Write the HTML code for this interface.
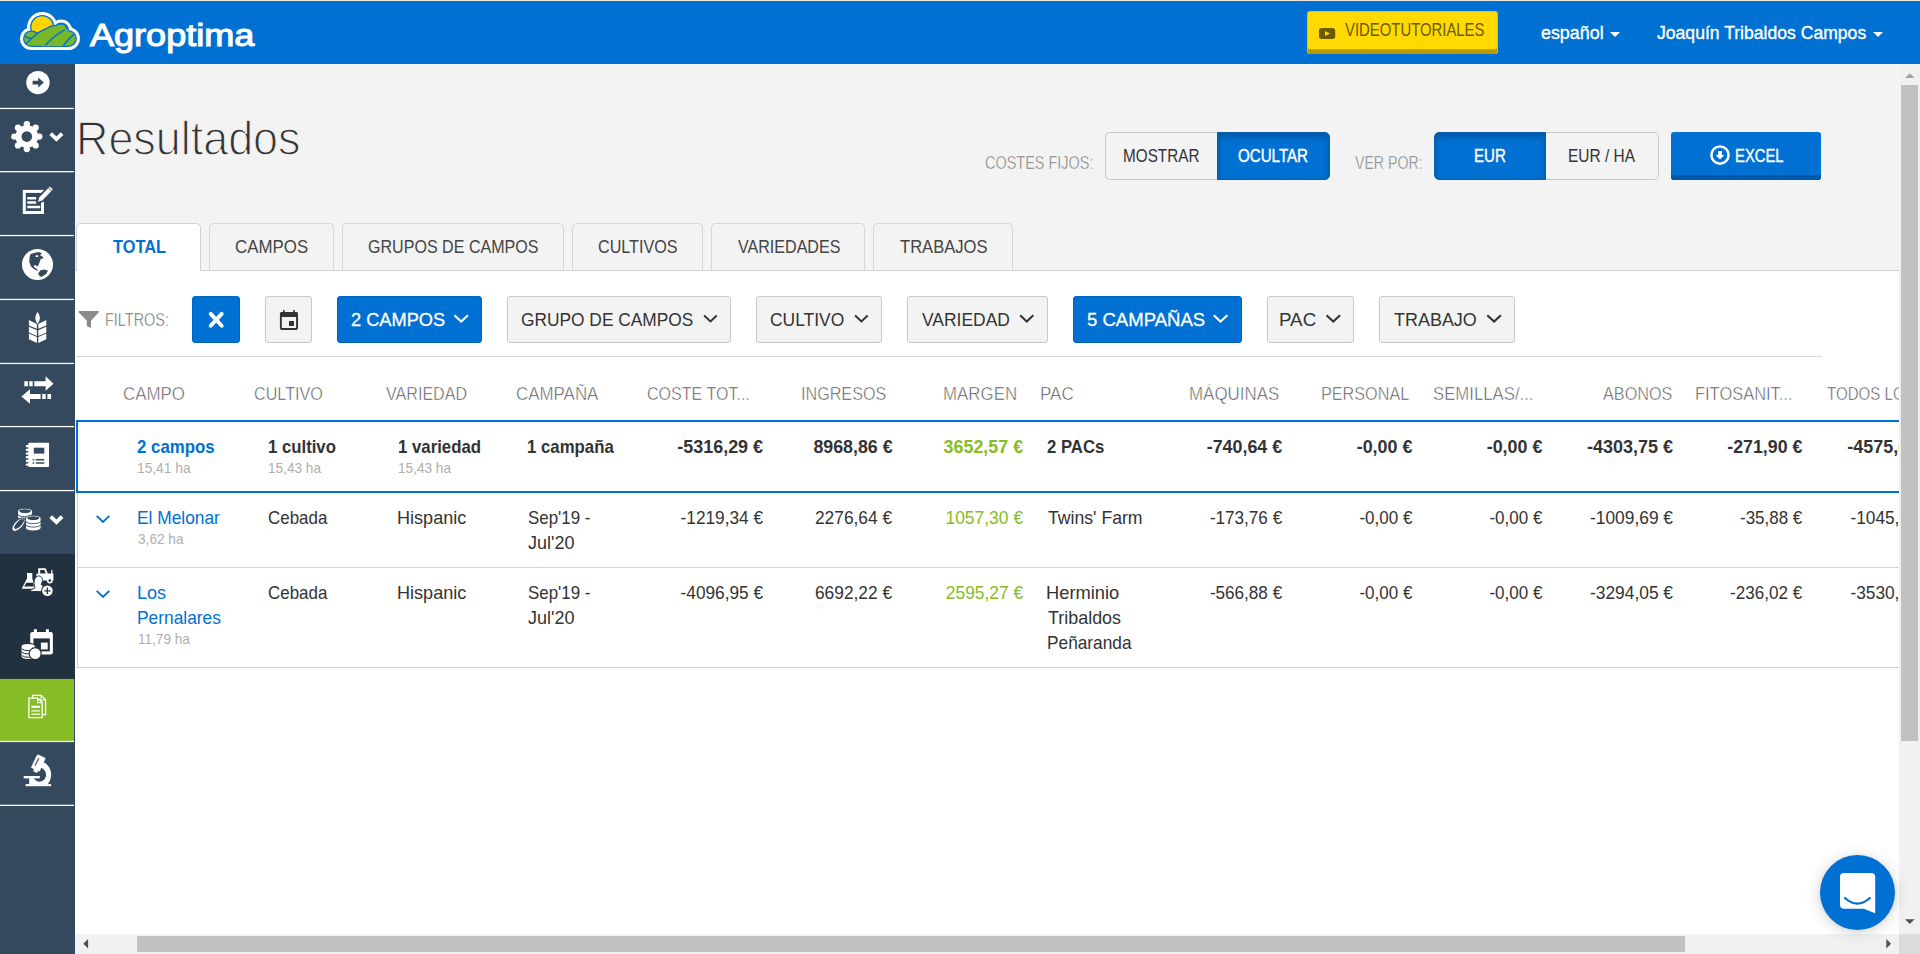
<!DOCTYPE html>
<html lang="es">
<head>
<meta charset="utf-8">
<title>Agroptima - Resultados</title>
<style>
*{box-sizing:border-box;margin:0;padding:0}
html,body{width:1920px;height:954px;overflow:hidden;background:#fff;font-family:"Liberation Sans",sans-serif;color:#333}
#root{position:absolute;left:0;top:0;width:1920px;height:954px;overflow:hidden}
.a{position:absolute}
.t{position:absolute;white-space:nowrap;display:block}
svg{position:absolute;overflow:visible}
</style>
</head>
<body>
<div id="root">
<div class="a" style="left:75px;top:64px;width:1845px;height:207px;background:#f3f3f3"></div>
<div class="a" style="left:0px;top:0px;width:1920px;height:1px;background:#ece7df"></div>
<div class="a" style="left:0px;top:1px;width:1920px;height:63px;background:#0070d2"></div>
<div class="a" style="left:0px;top:64px;width:75px;height:890px;background:#34495e"></div>
<svg style="left:0;top:64px" width="75" height="890" viewBox="0 64 75 890">
<rect x="0" y="553.9" width="75" height="125" fill="#22313f"/>
<rect x="0" y="678.9" width="74" height="62.2" fill="#86bc24"/>
<rect x="0" y="107.8" width="74" height="1.3" fill="#fafbfc"/>
<rect x="0" y="171.0" width="74" height="1.3" fill="#fafbfc"/>
<rect x="0" y="234.9" width="74" height="1.3" fill="#fafbfc"/>
<rect x="0" y="298.8" width="74" height="1.3" fill="#fafbfc"/>
<rect x="0" y="362.8" width="74" height="1.3" fill="#fafbfc"/>
<rect x="0" y="425.9" width="74" height="1.3" fill="#fafbfc"/>
<rect x="0" y="489.9" width="74" height="1.3" fill="#fafbfc"/>
<rect x="0" y="740.8" width="74" height="1.3" fill="#fafbfc"/>
<rect x="0" y="804.7" width="74" height="1.3" fill="#fafbfc"/>
<circle cx="37.95" cy="82.6" r="11.7" fill="#fff"/>
<path d="M32.6 80.8H38.2V77.6L43.9 82.6L38.2 87.6V84.4H32.6Z" fill="#34495e"/>
<circle cx="26.8" cy="136.6" r="11.3" fill="#fff"/>
<circle cx="26.80" cy="124.10" r="3.15" fill="#fff"/>
<circle cx="35.64" cy="127.76" r="3.15" fill="#fff"/>
<circle cx="39.30" cy="136.60" r="3.15" fill="#fff"/>
<circle cx="35.64" cy="145.44" r="3.15" fill="#fff"/>
<circle cx="26.80" cy="149.10" r="3.15" fill="#fff"/>
<circle cx="17.96" cy="145.44" r="3.15" fill="#fff"/>
<circle cx="14.30" cy="136.60" r="3.15" fill="#fff"/>
<circle cx="17.96" cy="127.76" r="3.15" fill="#fff"/>
<circle cx="26.8" cy="136.6" r="5.3" fill="#34495e"/>
<path d="M50.7 133.6L56.4 139.1L62.1 133.6" fill="none" stroke="#fff" stroke-width="3.8"/>
<rect x="24.3" y="191.4" width="18.2" height="21.1" fill="none" stroke="#fff" stroke-width="3"/>
<path d="M27.3 198.2H36.2M27.3 202.5H36.2M27.3 207H40.2" stroke="#fff" stroke-width="2.5" fill="none"/>
<path d="M49.88 186.48L52.92 189.52L42.22 200.62L38.1 201.7L39.18 197.58Z" fill="#fff" stroke="#34495e" stroke-width="3.6" stroke-linejoin="round"/>
<path d="M49.88 186.48L52.92 189.52L42.22 200.62L38.1 201.7L39.18 197.58Z" fill="#fff"/>
<path d="M48.5 187.9L51.5 190.9" stroke="#34495e" stroke-width="0.9"/>
<circle cx="37.5" cy="264.5" r="15.5" fill="#fff"/>
<path d="M30.3 254.3L33.9 253.1L38.6 252L42.1 253.3L40 255L42.8 257.1L43.5 258.3L40.7 259L39.8 261.8L38.3 265.6L36.7 266.5L35.8 265.1L33.9 265.6L34.3 267.5L36.2 268.4L38.1 270.3L37.2 270.8L33.9 268.9L31 266.5L29.2 261.8L29.6 257.1Z" fill="#34495e"/>
<path d="M38.1 273.6L40.5 270.3L44.2 269.4L48 270.8L46.1 274.1L41.4 276.9L39.5 276Z" fill="#34495e"/>
<path d="M35.3 255.7L37.6 255L38.6 256.2L37.6 257.1L35.8 256.9Z" fill="#fff"/>
<path d="M37.6 311.9C40.6 316 40.6 320 37.6 323.8C34.6 320 34.6 316 37.6 311.9Z" fill="#fff"/>
<path d="M28.90 319.9L36.90 323.9V328.8L28.90 325.5Z" fill="#fff"/>
<path d="M46.30 319.9L38.30 323.9V328.8L46.30 325.5Z" fill="#fff"/>
<path d="M28.90 326.7L36.90 330.2V335.9L28.90 332.6Z" fill="#fff"/>
<path d="M46.30 326.7L38.30 330.2V335.9L46.30 332.6Z" fill="#fff"/>
<path d="M28.90 333.5L36.90 337.1V343.1L28.90 339.2Z" fill="#fff"/>
<path d="M46.30 333.5L38.30 337.1V343.1L46.30 339.2Z" fill="#fff"/>
<path d="M24.3 381.3H27.9V386.2H24.3ZM29.3 381.3H32.7V386.2H29.3ZM34.3 381.3H45.6V376.3L53.5 383.7L45.6 390.8V386.2H34.3Z" fill="#fff"/>
<path d="M51.1 394H47.4V399H51.1ZM45.7 394H42.2V399H45.7ZM40.6 394H30V389.2L21.4 396.5L30 403.8V399H40.6Z" fill="#fff"/>
<rect x="28.3" y="442.75" width="20.75" height="24.35" rx="0.8" fill="#fff"/>
<rect x="25.8" y="445.00" width="3.4" height="2.3" rx=".7" fill="#fff"/>
<rect x="25.8" y="448.69" width="3.4" height="2.3" rx=".7" fill="#fff"/>
<rect x="25.8" y="452.38" width="3.4" height="2.3" rx=".7" fill="#fff"/>
<rect x="25.8" y="456.07" width="3.4" height="2.3" rx=".7" fill="#fff"/>
<rect x="25.8" y="459.76" width="3.4" height="2.3" rx=".7" fill="#fff"/>
<rect x="25.8" y="463.45" width="3.4" height="2.3" rx=".7" fill="#fff"/>
<rect x="33.8" y="447.7" width="10.5" height="5.9" fill="#34495e"/>
<path d="M32.7 459.7H34.2M35.8 459.7H44.3M32.7 463.1H34.2M35.8 463.1H44.3" stroke="#34495e" stroke-width="1.5"/>
<path d="M17.5 511.1A7.55 2.9 0 0 1 32.6 511.1V519.5A7.55 2.9 0 0 1 17.5 519.5Z" fill="#fff" stroke="#34495e" stroke-width="1"/>
<path d="M17.5 513.9A7.55 2.9 0 0 0 32.6 513.9" fill="none" stroke="#34495e" stroke-width="0.9"/>
<path d="M17.5 517.0A7.55 2.9 0 0 0 32.6 517.0" fill="none" stroke="#34495e" stroke-width="0.9"/>
<ellipse cx="25.05" cy="511.1" rx="5.85" ry="1.90" fill="#34495e"/>
<ellipse cx="18.5" cy="524.6" rx="8.4" ry="4.2" fill="#fff" stroke="#34495e" stroke-width="1" transform="rotate(-45 18.5 524.6)"/>
<ellipse cx="19.1" cy="523.9" rx="6.6" ry="2.5" fill="#34495e" transform="rotate(-45 19.1 523.9)"/>
<path d="M25.499999999999996 518.1A7.8 2.9 0 0 1 41.099999999999994 518.1V528.1A7.8 2.9 0 0 1 25.499999999999996 528.1Z" fill="#fff" stroke="#34495e" stroke-width="1"/>
<path d="M25.499999999999996 520.8A7.8 2.9 0 0 0 41.099999999999994 520.8" fill="none" stroke="#34495e" stroke-width="0.9"/>
<path d="M25.499999999999996 524.2A7.8 2.9 0 0 0 41.099999999999994 524.2" fill="none" stroke="#34495e" stroke-width="0.9"/>
<ellipse cx="33.3" cy="518.1" rx="6.1" ry="1.90" fill="#34495e"/>
<path d="M50.7 516.6L56.4 522.1L62.1 516.6" fill="none" stroke="#fff" stroke-width="3.8"/>
<path d="M27 573H32.3V578.6L35.6 588.8H21.6L27 578.6Z" fill="#fff"/>
<path d="M26.2 582.7H33L34 586.4H24.2Z" fill="#22313f"/>
<path d="M38.2 568.2H45.6L47.8 573.6H51.2V570H52.4V573.6H53.4V580.4H36.4V573.8H38.2Z" fill="#fff"/>
<path d="M40.2 570H44.4L45.8 573.6H40.2Z" fill="#22313f"/>
<circle cx="49.8" cy="580.6" r="2.9" fill="#fff"/><circle cx="49.8" cy="580.6" r="1.3" fill="#22313f"/>
<path d="M37.6 576.2C40.4 575.4 42.6 577.4 42.4 580.6C42.3 582.4 41.6 583.6 41 584.4C43.6 585.6 45.6 587.4 45.8 591.6H30.2C30.4 590 32.2 589 34.6 588.2C35.4 587.4 34.2 585.6 34 583.6C33.8 580.2 35 577 37.6 576.2Z" fill="#fff" stroke="#22313f" stroke-width="1"/>
<circle cx="47.4" cy="590.8" r="6.4" fill="#22313f"/><circle cx="47.4" cy="590.8" r="5.3" fill="#fff"/>
<path d="M44.2 590.8H50.6M47.4 587.6V594" stroke="#22313f" stroke-width="1.3"/>
<rect x="30.2" y="632" width="22.7" height="22.5" rx="2.2" fill="#fff"/>
<rect x="33.9" y="629.2" width="3" height="4" fill="#fff"/><rect x="45.9" y="629.2" width="3" height="4" fill="#fff"/>
<rect x="33.4" y="638.4" width="16.4" height="13" fill="#22313f"/>
<rect x="40.9" y="642.6" width="6.8" height="6.8" fill="#fff"/>
<path d="M21 646.4A7.2 3 0 0 1 35.4 646.4V656.6A7.2 3 0 0 1 21 656.6Z" fill="#fff" stroke="#22313f" stroke-width="1.2"/>
<path d="M22 649.0A7.2 2.6 0 0 0 35.4 649.0" fill="none" stroke="#22313f" stroke-width="1"/>
<path d="M22 652.3A7.2 2.6 0 0 0 35.4 652.3" fill="none" stroke="#22313f" stroke-width="1"/>
<path d="M22 655.6A7.2 2.6 0 0 0 35.4 655.6" fill="none" stroke="#22313f" stroke-width="1"/>
<circle cx="35.2" cy="653.6" r="6" fill="#fff" stroke="#22313f" stroke-width="1.2"/>
<path d="M32.7 698.8V695.4H41.2L45.6 699.8V714.6H42.2" fill="none" stroke="#fff" stroke-width="1.3"/>
<path d="M41 695.6V700H45.4" fill="none" stroke="#fff" stroke-width="1.1"/>
<path d="M28.9 698.2H37.8L42.2 702.6V717.6H28.9Z" fill="#86bc24" stroke="#fff" stroke-width="1.3"/>
<path d="M37.6 698.4V702.8H42" fill="none" stroke="#fff" stroke-width="1.1"/>
<path d="M31.4 706.8H39.8" stroke="#fff" stroke-width="2.2"/><path d="M31.4 710.8H39.8M31.4 714.2H39.8" stroke="#fff" stroke-width="1.2"/>
<path d="M38.2 754.9L45.2 758.3L39.4 771.2L37.9 770.5L36.9 772.6L33.6 771L34.5 769L31.4 767.5L37.2 755.3Z" fill="#fff" stroke="#fff" stroke-width="0.8" stroke-linejoin="round"/>
<path d="M38.9 758.2L35 765.4" stroke="#34495e" stroke-width="1.15"/>
<path d="M43.3 762.2C47 763.6 50.6 767.6 51.1 773.4C51.4 777.8 49.8 781.8 47.4 784.6H33.9V778.3C35.4 780.8 37.6 782 40.4 781.6C43.4 781.2 46 778.6 46.1 774.8C46.2 771.6 44 768.8 40.3 767.4Z" fill="#fff"/>
<rect x="23.7" y="776" width="16.1" height="2.4" fill="#fff"/>
<rect x="29.2" y="778.2" width="4.8" height="6.4" fill="#fff"/>
<rect x="25.6" y="784.1" width="25.5" height="2.1" fill="#fff"/>
</svg>

<svg style="left:14px;top:6px" width="72" height="50" viewBox="0 0 72 50"><defs><clipPath id="cl"><circle cx="17.3" cy="32.7" r="7.00" fill="#000"/><circle cx="28.3" cy="21.2" r="10.90" fill="#000"/><circle cx="47.2" cy="24.4" r="6.60" fill="#000"/><circle cx="54.5" cy="32.6" r="7.10" fill="#000"/><rect x="17.3" y="28.30" width="37.2" height="11.40" fill="#000"/><rect x="28" y="20.30" width="20" height="20" fill="#000"/></clipPath></defs><circle cx="17.3" cy="32.7" r="11.30" fill="#fff"/><circle cx="28.3" cy="21.2" r="15.20" fill="#fff"/><circle cx="47.2" cy="24.4" r="10.90" fill="#fff"/><circle cx="54.5" cy="32.6" r="11.40" fill="#fff"/><rect x="17.3" y="24.00" width="37.2" height="20.00" fill="#fff"/><rect x="28" y="16.00" width="20" height="20" fill="#fff"/><circle cx="17.3" cy="32.7" r="8.30" fill="#0070d2"/><circle cx="28.3" cy="21.2" r="12.20" fill="#0070d2"/><circle cx="47.2" cy="24.4" r="7.90" fill="#0070d2"/><circle cx="54.5" cy="32.6" r="8.40" fill="#0070d2"/><rect x="17.3" y="27.00" width="37.2" height="14.00" fill="#0070d2"/><rect x="28" y="19.00" width="20" height="20" fill="#0070d2"/><g clip-path="url(#cl)"><rect x="0" y="0" width="72" height="50" fill="#0070d2"/><circle cx="28.3" cy="21.4" r="11.6" fill="#ffd500"/><path d="M5 38L8.4 30.6Q11.5 25.2 16.8 24.9Q20.6 25 23.2 27.2L36.7 20.4Q43.5 17.6 49.6 18Q52 19.6 53 22.4Q58.8 24 62.6 31L66 46H5Z" fill="#78b72a" stroke="#0070d2" stroke-width="1.5"/><path d="M10.2 29.6Q13.6 32.6 17.4 32.2M12.4 37.6Q18 31.4 24 27M31.2 39.4Q40 29.6 51 23.6M49.4 39.6Q54.6 32.6 60.2 28.2" fill="none" stroke="#0070d2" stroke-width="1.5"/></g></svg>

<span class="t" style="top:13.54px;font-size:32.2px;line-height:42px;color:#fff;left:89.80px;transform-origin:0 50%;transform:scaleX(1.1202);-webkit-text-stroke:1.1px #fff;">Agroptima</span>
<div class="a" style="left:1307px;top:11px;width:191px;height:43px;background:#ffd900;border:1px solid #e6c300;border-bottom:none;box-shadow:inset 0 -4.8px 0 #b89a00;border-radius:3px"></div>
<span class="t" style="top:19.10px;font-size:17.6px;line-height:23px;color:#6b5a00;left:1345.03px;transform-origin:0 50%;transform:scaleX(0.8456);">VIDEOTUTORIALES</span>
<svg style="left:1318.8px;top:28.1px" width="16.2" height="10.9" viewBox="0 0 16.2 10.9"><rect x="0" y="0" width="16.2" height="10.9" rx="2.6" fill="#6b5a00"/><path d="M6 2.9L11 5.45L6 8Z" fill="#ffd900"/></svg>

<span class="t" style="top:20.72px;font-size:18.4px;line-height:24px;color:#fff;left:1540.98px;transform-origin:0 50%;transform:scaleX(0.9717);-webkit-text-stroke:.35px #fff;">español</span>
<span class="t" style="top:20.72px;font-size:18.4px;line-height:24px;color:#fff;left:1657.04px;transform-origin:0 50%;transform:scaleX(0.9562);-webkit-text-stroke:.35px #fff;">Joaquín Tribaldos Campos</span>
<svg style="left:1610px;top:32.2px" width="10" height="5.2" viewBox="0 0 10 5"><path d="M0 0H10L5 5Z" fill="#fff"/></svg>
<svg style="left:1873.2px;top:32.2px" width="10" height="5.2" viewBox="0 0 10 5"><path d="M0 0H10L5 5Z" fill="#fff"/></svg>
<span class="t" style="top:106.22px;font-size:49px;line-height:64px;color:#333;left:75.61px;transform-origin:0 50%;transform:scaleX(0.9157);-webkit-text-stroke:1.35px #f3f3f3;">Resultados</span>
<span class="t" style="top:150.92px;font-size:18.4px;line-height:24px;color:#6c6c6c;left:985.10px;transform-origin:0 50%;transform:scaleX(0.7860);-webkit-text-stroke:0.55px #f3f3f3;">COSTES FIJOS:</span>
<span class="t" style="top:150.92px;font-size:18.4px;line-height:24px;color:#6c6c6c;left:1355.05px;transform-origin:0 50%;transform:scaleX(0.7682);-webkit-text-stroke:0.55px #f3f3f3;">VER POR:</span>
<div class="a" style="left:1105.2px;top:132.2px;width:112px;height:47.4px;background:#f3f3f3;border:1px solid #c6c6c6;border-radius:5px 0 0 5px;border-right:none"></div>
<div class="a" style="left:1216.8px;top:132.2px;width:113px;height:47.4px;background:#0070d2;border:1px solid #0a5cab;box-shadow:inset 0 3px 6px rgba(0,0,0,.25);border-radius:0 5px 5px 0"></div>
<span class="t" style="top:145.00px;font-size:17.6px;line-height:23px;color:#333;left:1123.08px;transform-origin:0 50%;transform:scaleX(0.8695);">MOSTRAR</span>
<span class="t" style="top:145.00px;font-size:17.6px;line-height:23px;color:#fff;left:1238.42px;transform-origin:0 50%;transform:scaleX(0.8598);-webkit-text-stroke:.4px #fff;">OCULTAR</span>
<div class="a" style="left:1434.3px;top:132.2px;width:111.6px;height:47.4px;background:#0070d2;border:1px solid #0a5cab;box-shadow:inset 0 3px 6px rgba(0,0,0,.25);border-radius:5px 0 0 5px"></div>
<div class="a" style="left:1545.7px;top:132.2px;width:113px;height:47.4px;background:#f3f3f3;border:1px solid #c6c6c6;border-radius:0 5px 5px 0;border-left:none"></div>
<span class="t" style="top:145.00px;font-size:17.6px;line-height:23px;color:#fff;left:1473.99px;transform-origin:0 50%;transform:scaleX(0.8559);-webkit-text-stroke:.4px #fff;">EUR</span>
<span class="t" style="top:145.00px;font-size:17.6px;line-height:23px;color:#333;left:1567.66px;transform-origin:0 50%;transform:scaleX(0.8783);">EUR / HA</span>
<div class="a" style="left:1671px;top:132.2px;width:150px;height:48px;background:#0070d2;box-shadow:inset 0 -4.8px 0 #0059a8;border-radius:3px"></div>
<span class="t" style="top:144.80px;font-size:17.6px;line-height:23px;color:#fff;left:1734.81px;transform-origin:0 50%;transform:scaleX(0.8424);-webkit-text-stroke:.35px #fff;">EXCEL</span>
<svg style="left:1708px;top:142.5px" width="24" height="24" viewBox="1708 142.5 24 24"><circle cx="1720" cy="154.55" r="8.6" fill="none" stroke="#fff" stroke-width="2.5"/><path d="M1718 150.4H1722V154.6H1724.4L1720 159L1715.6 154.6H1718Z" fill="#fff"/></svg>

<div class="a" style="left:75px;top:269.6px;width:1845px;height:1.3px;background:#d2d2d2"></div>
<div class="a" style="left:76px;top:223px;width:124.80000000000001px;height:48.2px;background:#fff;border:1.3px solid #d2d2d2;border-bottom:none;border-radius:5px 5px 0 0"></div>
<span class="t" style="top:235.60px;font-size:17.6px;line-height:23px;color:#0070d2;font-weight:bold;left:112.64px;transform-origin:0 50%;transform:scaleX(0.9286);">TOTAL</span>
<div class="a" style="left:209.2px;top:223px;width:124.60000000000002px;height:46.8px;background:#f3f3f3;border:1.3px solid #d6d6d6;border-bottom:none;border-radius:5px 5px 0 0"></div>
<span class="t" style="top:235.60px;font-size:17.6px;line-height:23px;color:#444;left:235.46px;transform-origin:0 50%;transform:scaleX(0.9593);">CAMPOS</span>
<div class="a" style="left:342.2px;top:223px;width:221.8px;height:46.8px;background:#f3f3f3;border:1.3px solid #d6d6d6;border-bottom:none;border-radius:5px 5px 0 0"></div>
<span class="t" style="top:235.60px;font-size:17.6px;line-height:23px;color:#444;left:368.30px;transform-origin:0 50%;transform:scaleX(0.9132);">GRUPOS DE CAMPOS</span>
<div class="a" style="left:572.2px;top:223px;width:130.5px;height:46.8px;background:#f3f3f3;border:1.3px solid #d6d6d6;border-bottom:none;border-radius:5px 5px 0 0"></div>
<span class="t" style="top:235.60px;font-size:17.6px;line-height:23px;color:#444;left:598.19px;transform-origin:0 50%;transform:scaleX(0.9176);">CULTIVOS</span>
<div class="a" style="left:711.1px;top:223px;width:153.89999999999998px;height:46.8px;background:#f3f3f3;border:1.3px solid #d6d6d6;border-bottom:none;border-radius:5px 5px 0 0"></div>
<span class="t" style="top:235.60px;font-size:17.6px;line-height:23px;color:#444;left:737.92px;transform-origin:0 50%;transform:scaleX(0.9134);">VARIEDADES</span>
<div class="a" style="left:873.4px;top:223px;width:139.5px;height:46.8px;background:#f3f3f3;border:1.3px solid #d6d6d6;border-bottom:none;border-radius:5px 5px 0 0"></div>
<span class="t" style="top:235.60px;font-size:17.6px;line-height:23px;color:#444;left:900.47px;transform-origin:0 50%;transform:scaleX(0.9422);">TRABAJOS</span>
<svg style="left:78px;top:310px" width="22" height="19" viewBox="78 310 22 19"><path d="M79.4 311H98C99 311 99.2 311.9 98.6 312.6L91 320.8V327.9L86.8 326.2V320.8L78.8 312.6C78.2 311.9 78.4 311 79.4 311Z" fill="#8a8a8a"/></svg>

<span class="t" style="top:309.09px;font-size:17.93px;line-height:23px;color:#5c5c5c;left:104.69px;transform-origin:0 50%;transform:scaleX(0.8061);-webkit-text-stroke:0.5px #fff;">FILTROS:</span>
<div class="a" style="left:192.1px;top:296px;width:47.7px;height:46.8px;background:#0070d2;border:1.3px solid #0066c0;border-radius:3px;"></div>
<div class="a" style="left:265.1px;top:296px;width:46.8px;height:46.8px;background:#f3f3f3;border:1.3px solid #c8c8c8;border-radius:3px;"></div>
<svg style="left:206px;top:309px" width="20" height="22" viewBox="206 309 20 22"><path d="M210.7 313.9L221.7 325.8M221.7 313.9L210.7 325.8" stroke="#fff" stroke-width="3.9" stroke-linecap="round"/></svg>

<svg style="left:278px;top:308px" width="22" height="24" viewBox="278 308 22 24"><rect x="280.85" y="312.9" width="16.2" height="16.1" rx="1.6" fill="none" stroke="#333" stroke-width="1.9"/><rect x="280" y="312" width="18" height="4.9" rx="1.5" fill="#333"/><rect x="283" y="310" width="1.6" height="3" fill="#333"/><rect x="293.2" y="310" width="1.6" height="3" fill="#333"/><rect x="289" y="321" width="5" height="5" fill="#333"/></svg>

<div class="a" style="left:337px;top:296px;width:144.89999999999998px;height:46.8px;background:#0070d2;border:1.3px solid #0066c0;border-radius:3px;"></div>
<span class="t" style="top:306.82px;font-size:19px;line-height:25px;color:#fff;left:350.69px;transform-origin:0 50%;transform:scaleX(0.9582);-webkit-text-stroke:.3px #fff;">2 CAMPOS</span>
<svg style="left:453.4px;top:313.7px" width="16.4" height="9" viewBox="0 0 16 9"><path d="M1.2 1.2L8 7.6L14.8 1.2" fill="none" stroke="#fff" stroke-width="2.1"/></svg>
<div class="a" style="left:507.2px;top:296px;width:223.50000000000006px;height:46.8px;background:#f3f3f3;border:1.3px solid #c8c8c8;border-radius:3px;"></div>
<span class="t" style="top:306.82px;font-size:19px;line-height:25px;color:#333;left:521.13px;transform-origin:0 50%;transform:scaleX(0.9121);">GRUPO DE CAMPOS</span>
<svg style="left:702.8px;top:313.7px" width="14.9" height="9" viewBox="0 0 16 9"><path d="M1.2 1.2L8 7.6L14.8 1.2" fill="none" stroke="#333" stroke-width="2.1"/></svg>
<div class="a" style="left:756.3px;top:296px;width:125.30000000000007px;height:46.8px;background:#f3f3f3;border:1.3px solid #c8c8c8;border-radius:3px;"></div>
<span class="t" style="top:306.82px;font-size:19px;line-height:25px;color:#333;left:769.93px;transform-origin:0 50%;transform:scaleX(0.9173);">CULTIVO</span>
<svg style="left:853.7px;top:313.7px" width="14.8" height="9" viewBox="0 0 16 9"><path d="M1.2 1.2L8 7.6L14.8 1.2" fill="none" stroke="#333" stroke-width="2.1"/></svg>
<div class="a" style="left:907.4px;top:296px;width:140.80000000000007px;height:46.8px;background:#f3f3f3;border:1.3px solid #c8c8c8;border-radius:3px;"></div>
<span class="t" style="top:306.82px;font-size:19px;line-height:25px;color:#333;left:921.91px;transform-origin:0 50%;transform:scaleX(0.9185);">VARIEDAD</span>
<svg style="left:1019.0px;top:313.7px" width="15.5" height="9" viewBox="0 0 16 9"><path d="M1.2 1.2L8 7.6L14.8 1.2" fill="none" stroke="#333" stroke-width="2.1"/></svg>
<div class="a" style="left:1072.7px;top:296px;width:169.29999999999995px;height:46.8px;background:#0070d2;border:1.3px solid #0066c0;border-radius:3px;"></div>
<span class="t" style="top:306.82px;font-size:19px;line-height:25px;color:#fff;left:1086.56px;transform-origin:0 50%;transform:scaleX(0.9756);-webkit-text-stroke:.3px #fff;">5 CAMPAÑAS</span>
<svg style="left:1212.4px;top:313.7px" width="17.1" height="9" viewBox="0 0 16 9"><path d="M1.2 1.2L8 7.6L14.8 1.2" fill="none" stroke="#fff" stroke-width="2.1"/></svg>
<div class="a" style="left:1267.1px;top:296px;width:87.10000000000014px;height:46.8px;background:#f3f3f3;border:1.3px solid #c8c8c8;border-radius:3px;"></div>
<span class="t" style="top:306.82px;font-size:19px;line-height:25px;color:#333;left:1279.30px;transform-origin:0 50%;transform:scaleX(0.9877);">PAC</span>
<svg style="left:1325.3px;top:313.7px" width="16.6" height="9" viewBox="0 0 16 9"><path d="M1.2 1.2L8 7.6L14.8 1.2" fill="none" stroke="#333" stroke-width="2.1"/></svg>
<div class="a" style="left:1379px;top:296px;width:135.79999999999995px;height:46.8px;background:#f3f3f3;border:1.3px solid #c8c8c8;border-radius:3px;"></div>
<span class="t" style="top:306.82px;font-size:19px;line-height:25px;color:#333;left:1393.74px;transform-origin:0 50%;transform:scaleX(0.9449);">TRABAJO</span>
<svg style="left:1486.0px;top:313.7px" width="16.2" height="9" viewBox="0 0 16 9"><path d="M1.2 1.2L8 7.6L14.8 1.2" fill="none" stroke="#333" stroke-width="2.1"/></svg>
<div class="a" style="left:76px;top:355.6px;width:1745.5px;height:1.3px;background:#d6d6d6"></div>
<span class="t" style="top:382.42px;font-size:18.4px;line-height:24px;color:#484848;left:122.93px;transform-origin:0 50%;transform:scaleX(0.9180);-webkit-text-stroke:0.55px #fff;">CAMPO</span>
<span class="t" style="top:382.42px;font-size:18.4px;line-height:24px;color:#484848;left:254.22px;transform-origin:0 50%;transform:scaleX(0.8792);-webkit-text-stroke:0.55px #fff;">CULTIVO</span>
<span class="t" style="top:382.42px;font-size:18.4px;line-height:24px;color:#484848;left:385.69px;transform-origin:0 50%;transform:scaleX(0.8755);-webkit-text-stroke:0.55px #fff;">VARIEDAD</span>
<span class="t" style="top:382.42px;font-size:18.4px;line-height:24px;color:#484848;left:516.18px;transform-origin:0 50%;transform:scaleX(0.9195);-webkit-text-stroke:0.55px #fff;">CAMPAÑA</span>
<span class="t" style="top:382.42px;font-size:18.4px;line-height:24px;color:#484848;left:647.02px;transform-origin:0 50%;transform:scaleX(0.8723);-webkit-text-stroke:0.55px #fff;">COSTE TOT...</span>
<span class="t" style="top:382.42px;font-size:18.4px;line-height:24px;color:#484848;left:800.67px;transform-origin:0 50%;transform:scaleX(0.8781);-webkit-text-stroke:0.55px #fff;">INGRESOS</span>
<span class="t" style="top:382.42px;font-size:18.4px;line-height:24px;color:#484848;left:942.97px;transform-origin:0 50%;transform:scaleX(0.9178);-webkit-text-stroke:0.55px #fff;">MARGEN</span>
<span class="t" style="top:382.42px;font-size:18.4px;line-height:24px;color:#484848;left:1039.56px;transform-origin:0 50%;transform:scaleX(0.9252);-webkit-text-stroke:0.55px #fff;">PAC</span>
<span class="t" style="top:382.42px;font-size:18.4px;line-height:24px;color:#484848;left:1188.67px;transform-origin:0 50%;transform:scaleX(0.9204);-webkit-text-stroke:0.55px #fff;">MÁQUINAS</span>
<span class="t" style="top:382.42px;font-size:18.4px;line-height:24px;color:#484848;left:1321.03px;transform-origin:0 50%;transform:scaleX(0.8807);-webkit-text-stroke:0.55px #fff;">PERSONAL</span>
<span class="t" style="top:382.42px;font-size:18.4px;line-height:24px;color:#484848;left:1432.87px;transform-origin:0 50%;transform:scaleX(0.9104);-webkit-text-stroke:0.55px #fff;">SEMILLAS/...</span>
<span class="t" style="top:382.42px;font-size:18.4px;line-height:24px;color:#484848;left:1602.62px;transform-origin:0 50%;transform:scaleX(0.8820);-webkit-text-stroke:0.55px #fff;">ABONOS</span>
<span class="t" style="top:382.42px;font-size:18.4px;line-height:24px;color:#484848;left:1694.71px;transform-origin:0 50%;transform:scaleX(0.8948);-webkit-text-stroke:0.55px #fff;">FITOSANIT...</span>
<span class="t" style="top:382.42px;font-size:18.4px;line-height:24px;color:#484848;left:1826.72px;transform-origin:0 50%;transform:scaleX(0.8196);-webkit-text-stroke:0.55px #fff;">TODOS LOS...</span>
<div class="a" style="left:77px;top:492px;width:1px;height:175.5px;background:#cfcfcf"></div>
<div class="a" style="left:77px;top:566.6px;width:1823px;height:1px;background:#d2d2d2"></div>
<div class="a" style="left:77px;top:666.6px;width:1823px;height:1px;background:#d2d2d2"></div>
<div class="a" style="left:75.8px;top:420px;width:1830px;height:72.6px;border:2.5px solid #0070d2;background:#fff"></div>
<span class="t" style="top:436.13px;font-size:17.8px;line-height:23px;color:#0070d2;font-weight:bold;left:137.21px;transform-origin:0 50%;transform:scaleX(0.9477);">2 campos</span>
<span class="t" style="top:459.48px;font-size:13.9px;line-height:18px;color:#aeaeae;left:137.17px;transform-origin:0 50%;transform:scaleX(0.9900);">15,41 ha</span>
<span class="t" style="top:436.13px;font-size:17.8px;line-height:23px;color:#333;font-weight:bold;left:267.54px;transform-origin:0 50%;transform:scaleX(0.9411);">1 cultivo</span>
<span class="t" style="top:459.48px;font-size:13.9px;line-height:18px;color:#aeaeae;left:267.53px;transform-origin:0 50%;transform:scaleX(0.9806);">15,43 ha</span>
<span class="t" style="top:436.13px;font-size:17.8px;line-height:23px;color:#333;font-weight:bold;left:397.54px;transform-origin:0 50%;transform:scaleX(0.9441);">1 variedad</span>
<span class="t" style="top:459.48px;font-size:13.9px;line-height:18px;color:#aeaeae;left:397.53px;transform-origin:0 50%;transform:scaleX(0.9806);">15,43 ha</span>
<span class="t" style="top:436.13px;font-size:17.8px;line-height:23px;color:#333;font-weight:bold;left:527.29px;transform-origin:0 50%;transform:scaleX(0.9436);">1 campaña</span>
<span class="t" style="top:436.13px;font-size:17.8px;line-height:23px;color:#333;font-weight:bold;right:1157.20px;transform-origin:100% 50%;transform:scaleX(1.0083);">-5316,29 €</span>
<span class="t" style="top:436.13px;font-size:17.8px;line-height:23px;color:#333;font-weight:bold;right:1027.45px;transform-origin:100% 50%;">8968,86 €</span>
<span class="t" style="top:436.13px;font-size:17.8px;line-height:23px;color:#86bc24;font-weight:bold;right:897.25px;transform-origin:100% 50%;transform:scaleX(1.0051);">3652,57 €</span>
<span class="t" style="top:436.13px;font-size:17.8px;line-height:23px;color:#333;font-weight:bold;left:1047.31px;transform-origin:0 50%;transform:scaleX(0.9391);">2 PACs</span>
<span class="t" style="top:436.13px;font-size:17.8px;line-height:23px;color:#333;font-weight:bold;right:637.72px;transform-origin:100% 50%;transform:scaleX(1.0037);">-740,64 €</span>
<span class="t" style="top:436.13px;font-size:17.8px;line-height:23px;color:#333;font-weight:bold;right:507.47px;transform-origin:100% 50%;transform:scaleX(1.0059);">-0,00 €</span>
<span class="t" style="top:436.13px;font-size:17.8px;line-height:23px;color:#333;font-weight:bold;right:377.27px;transform-origin:100% 50%;transform:scaleX(1.0059);">-0,00 €</span>
<span class="t" style="top:436.13px;font-size:17.8px;line-height:23px;color:#333;font-weight:bold;right:247.00px;transform-origin:100% 50%;transform:scaleX(1.0118);">-4303,75 €</span>
<span class="t" style="top:436.13px;font-size:17.8px;line-height:23px;color:#333;font-weight:bold;right:117.62px;transform-origin:100% 50%;">-271,90 €</span>
<span class="t" style="top:436.13px;font-size:17.8px;line-height:23px;color:#333;font-weight:bold;right:-12.70px;transform-origin:100% 50%;transform:scaleX(1.0083);">-4575,65 €</span>
<span class="t" style="top:506.93px;font-size:17.8px;line-height:23px;color:#0070d2;left:137.21px;transform-origin:0 50%;transform:scaleX(0.9747);">El Melonar</span>
<span class="t" style="top:530.18px;font-size:13.9px;line-height:18px;color:#aeaeae;left:137.65px;transform-origin:0 50%;transform:scaleX(0.9825);">3,62 ha</span>
<span class="t" style="top:506.93px;font-size:17.8px;line-height:23px;color:#333;left:267.70px;transform-origin:0 50%;transform:scaleX(0.9526);">Cebada</span>
<span class="t" style="top:506.93px;font-size:17.8px;line-height:23px;color:#333;left:397.10px;transform-origin:0 50%;transform:scaleX(1.0167);">Hispanic</span>
<span class="t" style="top:506.93px;font-size:17.8px;line-height:23px;color:#333;left:527.54px;transform-origin:0 50%;transform:scaleX(0.9506);">Sep'19 -</span>
<span class="t" style="top:531.93px;font-size:17.8px;line-height:23px;color:#333;left:528.03px;transform-origin:0 50%;transform:scaleX(1.0103);">Jul'20</span>
<span class="t" style="top:506.93px;font-size:17.8px;line-height:23px;color:#333;right:1157.21px;transform-origin:100% 50%;transform:scaleX(0.9701);">-1219,34 €</span>
<span class="t" style="top:506.93px;font-size:17.8px;line-height:23px;color:#333;right:1027.46px;transform-origin:100% 50%;transform:scaleX(0.9750);">2276,64 €</span>
<span class="t" style="top:506.93px;font-size:17.8px;line-height:23px;color:#86bc24;right:897.26px;transform-origin:100% 50%;transform:scaleX(0.9819);">1057,30 €</span>
<span class="t" style="top:506.93px;font-size:17.8px;line-height:23px;color:#333;left:1047.55px;transform-origin:0 50%;transform:scaleX(0.9926);">Twins' Farm</span>
<span class="t" style="top:506.93px;font-size:17.8px;line-height:23px;color:#333;right:637.73px;transform-origin:100% 50%;transform:scaleX(0.9617);">-173,76 €</span>
<span class="t" style="top:506.93px;font-size:17.8px;line-height:23px;color:#333;right:507.49px;transform-origin:100% 50%;transform:scaleX(0.9560);">-0,00 €</span>
<span class="t" style="top:506.93px;font-size:17.8px;line-height:23px;color:#333;right:377.29px;transform-origin:100% 50%;transform:scaleX(0.9560);">-0,00 €</span>
<span class="t" style="top:506.93px;font-size:17.8px;line-height:23px;color:#333;right:247.01px;transform-origin:100% 50%;transform:scaleX(0.9760);">-1009,69 €</span>
<span class="t" style="top:506.93px;font-size:17.8px;line-height:23px;color:#333;right:117.65px;transform-origin:100% 50%;transform:scaleX(0.9540);">-35,88 €</span>
<span class="t" style="top:506.93px;font-size:17.8px;line-height:23px;color:#333;right:-12.69px;transform-origin:100% 50%;transform:scaleX(0.9712);">-1045,57 €</span>
<span class="t" style="top:582.13px;font-size:17.8px;line-height:23px;color:#0070d2;left:137.26px;transform-origin:0 50%;transform:scaleX(1.0146);">Los</span>
<span class="t" style="top:607.13px;font-size:17.8px;line-height:23px;color:#0070d2;left:137.21px;transform-origin:0 50%;transform:scaleX(0.9760);">Pernalares</span>
<span class="t" style="top:630.28px;font-size:13.9px;line-height:18px;color:#aeaeae;left:138.48px;transform-origin:0 50%;transform:scaleX(0.9772);">11,79 ha</span>
<span class="t" style="top:582.13px;font-size:17.8px;line-height:23px;color:#333;left:267.70px;transform-origin:0 50%;transform:scaleX(0.9526);">Cebada</span>
<span class="t" style="top:582.13px;font-size:17.8px;line-height:23px;color:#333;left:397.10px;transform-origin:0 50%;transform:scaleX(1.0167);">Hispanic</span>
<span class="t" style="top:582.13px;font-size:17.8px;line-height:23px;color:#333;left:527.54px;transform-origin:0 50%;transform:scaleX(0.9506);">Sep'19 -</span>
<span class="t" style="top:607.13px;font-size:17.8px;line-height:23px;color:#333;left:528.03px;transform-origin:0 50%;transform:scaleX(1.0103);">Jul'20</span>
<span class="t" style="top:582.13px;font-size:17.8px;line-height:23px;color:#333;right:1157.21px;transform-origin:100% 50%;transform:scaleX(0.9701);">-4096,95 €</span>
<span class="t" style="top:582.13px;font-size:17.8px;line-height:23px;color:#333;right:1027.46px;transform-origin:100% 50%;transform:scaleX(0.9750);">6692,22 €</span>
<span class="t" style="top:582.13px;font-size:17.8px;line-height:23px;color:#86bc24;right:897.26px;transform-origin:100% 50%;transform:scaleX(0.9763);">2595,27 €</span>
<span class="t" style="top:582.13px;font-size:17.8px;line-height:23px;color:#333;left:1046.43px;transform-origin:0 50%;transform:scaleX(1.0295);">Herminio</span>
<span class="t" style="top:607.13px;font-size:17.8px;line-height:23px;color:#333;left:1047.54px;transform-origin:0 50%;transform:scaleX(1.0076);">Tribaldos</span>
<span class="t" style="top:632.13px;font-size:17.8px;line-height:23px;color:#333;left:1046.52px;transform-origin:0 50%;transform:scaleX(0.9718);">Peñaranda</span>
<span class="t" style="top:582.13px;font-size:17.8px;line-height:23px;color:#333;right:637.73px;transform-origin:100% 50%;transform:scaleX(0.9617);">-566,88 €</span>
<span class="t" style="top:582.13px;font-size:17.8px;line-height:23px;color:#333;right:507.49px;transform-origin:100% 50%;transform:scaleX(0.9560);">-0,00 €</span>
<span class="t" style="top:582.13px;font-size:17.8px;line-height:23px;color:#333;right:377.29px;transform-origin:100% 50%;transform:scaleX(0.9560);">-0,00 €</span>
<span class="t" style="top:582.13px;font-size:17.8px;line-height:23px;color:#333;right:247.01px;transform-origin:100% 50%;transform:scaleX(0.9760);">-3294,05 €</span>
<span class="t" style="top:582.13px;font-size:17.8px;line-height:23px;color:#333;right:117.63px;transform-origin:100% 50%;transform:scaleX(0.9604);">-236,02 €</span>
<span class="t" style="top:582.13px;font-size:17.8px;line-height:23px;color:#333;right:-12.69px;transform-origin:100% 50%;transform:scaleX(0.9712);">-3530,07 €</span>
<svg style="left:95px;top:513px" width="16" height="12" viewBox="95 513 16 12"><path d="M96.7 515.8L103 522L109.3 515.8" fill="none" stroke="#0070d2" stroke-width="1.8"/></svg>
<svg style="left:95px;top:588px" width="16" height="12" viewBox="95 588 16 12"><path d="M96.7 590.8L103 597L109.3 590.8" fill="none" stroke="#0070d2" stroke-width="1.8"/></svg>

<div class="a" style="left:1899px;top:64px;width:21px;height:870px;background:#f1f1f1"></div>
<div class="a" style="left:1901.3px;top:85px;width:16.4px;height:656px;background:#c1c1c1"></div>
<svg style="left:1904.6px;top:72.6px" width="9.6" height="5.4" viewBox="0 0 10 5"><path d="M0 5H10L5 0Z" fill="#a3a3a3"/></svg>
<svg style="left:1904.6px;top:919.2px" width="9.6" height="5.4" viewBox="0 0 10 5"><path d="M0 0H10L5 5Z" fill="#505050"/></svg>
<div class="a" style="left:75px;top:934px;width:1824px;height:20px;background:#f1f1f1"></div>
<div class="a" style="left:136.8px;top:936.3px;width:1548px;height:16px;background:#c1c1c1"></div>
<svg style="left:83px;top:939.3px" width="5.4" height="9.6" viewBox="0 0 5 10"><path d="M5 0V10L0 5Z" fill="#505050"/></svg>
<svg style="left:1885.6px;top:939.3px" width="5.4" height="9.6" viewBox="0 0 5 10"><path d="M0 0V10L5 5Z" fill="#505050"/></svg>
<div class="a" style="left:1899px;top:934px;width:21px;height:20px;background:#dcdcdc"></div>
<div class="a" style="left:1820px;top:855px;width:75.2px;height:75.2px;border-radius:50%;background:#0070d2;box-shadow:0 2px 16px rgba(0,0,0,.16),0 1px 5px rgba(0,0,0,.08)"></div>
<svg style="left:1836px;top:870px" width="44" height="46" viewBox="1836 870 44 46"><path d="M1844 872.9H1871.2Q1875.2 872.9 1875.2 876.9V913.2L1863.8 908.7H1844Q1840 908.7 1840 904.7V876.9Q1840 872.9 1844 872.9Z" fill="#fff"/><path d="M1845 898Q1857.4 909.2 1869.8 898" fill="none" stroke="#0070d2" stroke-width="2.2" stroke-linecap="round"/></svg>

</div>
</body>
</html>
